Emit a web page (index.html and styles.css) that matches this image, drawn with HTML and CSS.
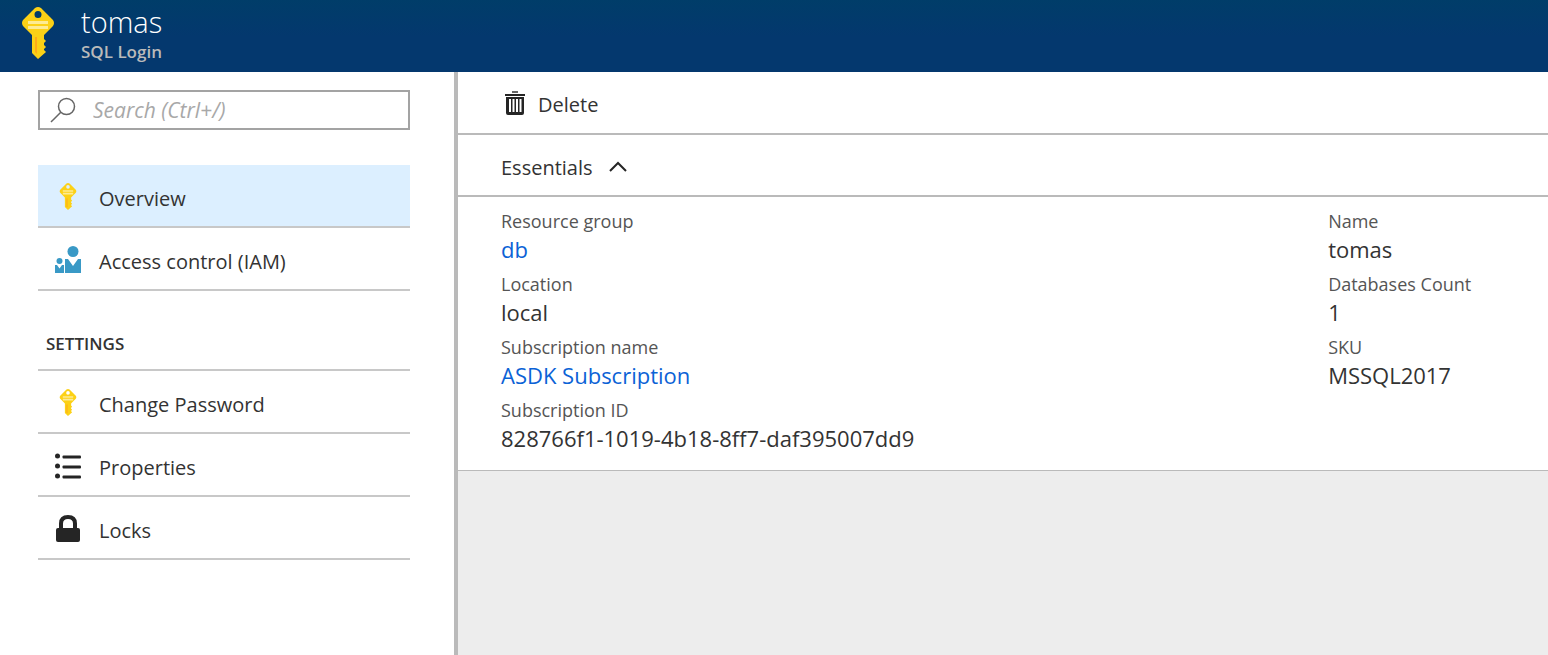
FILE: index.html
```html
<!DOCTYPE html>
<html lang="en">
<head>
<meta charset="utf-8">
<title>tomas - SQL Login</title>
<link rel="stylesheet" href="styles.css">
</head>
<body>
<svg class="defs" aria-hidden="true">
  <symbol id="key" viewBox="0 0 34 52">
    <path fill="#fcd116" fill-rule="evenodd" d="M14 1Q17-1 20 1L32 13Q34 16 32 19L23 28V32L25 34L23 36V38L25 40L23 42V43L25 45L17 52L11 46V28L2 19Q0 16 2 13ZM17 4A3.5 3.5 0 1 0 17 11A3.5 3.5 0 1 0 17 4Z"/>
    <path fill="#ff9f1a" opacity=".75" d="M14 30h2v17l-2-2z"/>
    <path fill="#fdeb93" d="M7 14h20v3H7zM7 19h20v3H7z"/>
  </symbol>
</svg>
<header class="header">
  <svg class="header-icon" aria-hidden="true"><use href="#key"/></svg>
  <div>
    <h1 class="title">tomas</h1>
    <p class="subtitle">SQL Login</p>
  </div>
</header>
<div class="body">
  <aside class="sidebar">
    <div class="search">
      <svg class="search-icon" viewBox="0 0 26 26" aria-hidden="true"><circle cx="16.500" cy="9.500" r="8" /><path d="M10.800 15.200L1 25"/></svg>
      <input class="search-input" type="text" aria-label="Search" placeholder="Search (Ctrl+/)">
    </div>
    <nav>
      <ul class="menu">
        <li><a class="item selected" href="#overview"><svg class="icon key-icon" aria-hidden="true"><use href="#key"/></svg><span>Overview</span></a></li>
        <li><a class="item" href="#iam"><svg class="icon" viewBox="0 0 26 27" aria-hidden="true"><g fill="#3999c6"><circle cx="18" cy="5.500" r="5.500"/><path d="M10 13H13L18 20L23 13H26V27H10Z"/><circle cx="4.500" cy="15" r="3"/><path d="M0 19H2L4.500 22.500L7 19H9V27H0Z"/></g></svg><span>Access control (IAM)</span></a></li>
      </ul>
      <h2 class="menu-title">SETTINGS</h2>
      <ul class="menu">
        <li><a class="item" href="#password"><svg class="icon key-icon" aria-hidden="true"><use href="#key"/></svg><span>Change Password</span></a></li>
        <li><a class="item" href="#properties"><svg class="icon" viewBox="0 0 26 27" aria-hidden="true"><g fill="#252525"><circle cx="2.500" cy="4" r="2.500"/><circle cx="2.500" cy="14" r="2.500"/><circle cx="2.500" cy="24" r="2.500"/><rect x="7.500" y="3.500" width="18.500" height="3" rx="1"/><rect x="7.500" y="13.500" width="18.500" height="3" rx="1"/><rect x="7.500" y="23.500" width="18.500" height="3" rx="1"/></g></svg><span>Properties</span></a></li>
        <li><a class="item" href="#locks"><svg class="icon" viewBox="0 0 26 27" aria-hidden="true"><path d="M6 14V8.500Q6 2 13 2T20 8.500V14" fill="none" stroke="#252525" stroke-width="4"/><rect x="1" y="13" width="24" height="14" rx="2" fill="#252525"/></svg><span>Locks</span></a></li>
      </ul>
    </nav>
  </aside>
  <main class="main">
    <div class="bar">
      <button class="command" type="button"><svg class="trash" viewBox="0 0 20 24" aria-hidden="true"><g fill="#252525"><path opacity=".7" d="M7 0h6v2H7z"/><path d="M0 3h20v2H0z"/><path fill-rule="evenodd" d="M1 6H19V22Q19 24 17 24H3Q1 24 1 22ZM4 8V21H6V8ZM7.500 8V21H9.500V8ZM11 8V21H13V8ZM14.500 8V21H16.500V8Z"/></g></svg><span>Delete</span></button>
    </div>
    <div class="bar essentials-bar">
      <button class="command essentials" type="button" aria-expanded="true"><span>Essentials</span><svg class="chevron" viewBox="0 0 18 12" aria-hidden="true"><path d="M1 10L9 2L17 10"/></svg></button>
    </div>
    <section class="details" aria-label="Essentials">
      <dl class="column">
        <dt>Resource group</dt><dd><a href="#db">db</a></dd>
        <dt>Location</dt><dd>local</dd>
        <dt>Subscription name</dt><dd><a href="#subscription">ASDK Subscription</a></dd>
        <dt>Subscription ID</dt><dd>828766f1-1019-4b18-8ff7-daf395007dd9</dd>
      </dl>
      <dl class="column">
        <dt>Name</dt><dd>tomas</dd>
        <dt>Databases Count</dt><dd>1</dd>
        <dt>SKU</dt><dd>MSSQL2017</dd>
      </dl>
    </section>
  </main>
</div>
</body>
</html>
```
FILE: styles.css
```css
* { box-sizing: border-box; }
body {
  display: flex;
  flex-direction: column;
  min-height: 100vh;
  margin: 0;
  background: #fff;
  color: #333;
  font-family: "Segoe UI", "Open Sans", sans-serif;
  font-size: 20px;
  line-height: 28px;
}
h1, h2, p, ul, dl, dd { margin: 0; padding: 0; }
ul { list-style: none; }
a { color: #0b62d6; text-decoration: none; }
.defs { position: absolute; width: 0; height: 0; }

.header {
  display: flex;
  align-items: flex-start;
  gap: 26px;
  height: 72px;
  padding: 7px 21px;
  background: linear-gradient(#003d69, #04386e 36px);
}
.header-icon { width: 34px; height: 52px; }
.title { color: #fff; font-size: 29px; font-weight: 300; line-height: 30px; }
.subtitle { color: #bababa; font-size: 17px; font-weight: 600; line-height: 30px; }

.body { display: flex; flex: 1; }
.sidebar {
  flex: 0 0 458px;
  padding: 18px 44px 18px 38px;
  border-right: 4px solid #bababa;
}
.search {
  display: flex;
  align-items: center;
  gap: 17px;
  height: 40px;
  margin-bottom: 35px;
  padding: 0 10px;
  border: 2px solid #a3a3a3;
}
.search-icon { flex: none; width: 26px; height: 26px; fill: none; stroke: #666; stroke-width: 1.5; }
.search-input {
  flex: 1;
  min-width: 0;
  padding: 0;
  border: 0;
  outline: 0;
  background: none;
  font: italic 400 21px/28px "Segoe UI", "Open Sans", sans-serif;
}
.search-input::placeholder { color: #a8a8a8; opacity: 1; }
.item {
  display: flex;
  align-items: center;
  gap: 18px;
  height: 63px;
  padding: 6px 17px 0;
  border-bottom: 2px solid #c8c8c8;
  color: #333;
}
.selected { background: #dcefff; }
.icon { width: 26px; height: 27px; margin-bottom: 4px; }
.menu-title {
  height: 80px;
  padding: 39px 8px 0;
  border-bottom: 2px solid #c8c8c8;
  font-size: 17px;
  font-weight: 600;
}

.main { flex: 1; min-width: 0; background: #ededed; }
.bar {
  display: flex;
  align-items: center;
  height: 63px;
  padding: 4px 43px 0;
  border-bottom: 2px solid #bababa;
  background: #fff;
}
.command {
  display: flex;
  align-items: center;
  gap: 13px;
  padding: 0 4px;
  border: 0;
  background: none;
  color: #333;
  font: inherit;
}
.essentials-bar { height: 62px; padding-top: 5px; }
.essentials { gap: 16px; padding: 0; }
.trash { width: 20px; height: 24px; margin-bottom: 3px; }
.chevron { width: 18px; height: 12px; margin-bottom: 2px; fill: none; stroke: #252525; stroke-width: 2; }
.details {
  display: grid;
  grid-template-columns: 79% 21%;
  padding: 10px 0 11px 43px;
  border-bottom: 1px solid #bababa;
  background: #fff;
}
dt { color: #555; font-size: 18px; line-height: 28px; }
dd { font-size: 22px; line-height: 28px; padding-bottom: 7px; }
```
